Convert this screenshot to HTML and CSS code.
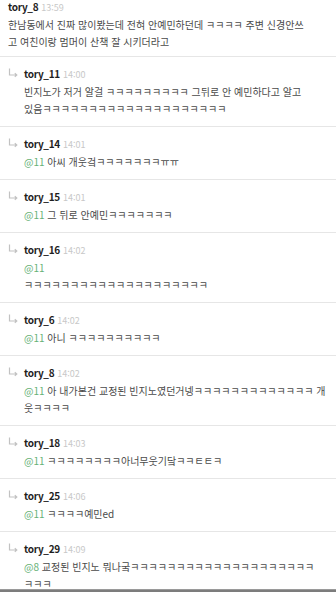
FILE: index.html
```html
<!DOCTYPE html>
<html lang="ko">
<head>
<meta charset="utf-8">
<title>댓글</title>
<link rel="stylesheet" href="styles.css">
</head>
<body>
<div class="screen">
  <ul class="thread">
    <li class="comment comment--root">
      <div class="head"><span class="name">tory_8</span><span class="time">13:59</span></div>
      <p class="text">한남동에서 진짜 많이봤는데 전혀 안예민하던데 ㅋㅋㅋㅋ 주변 신경안쓰<br>고 여친이랑 멈머이 산책 잘 시키더라고</p>
    </li>
    <li class="comment comment--reply">
      <svg class="arrow" viewBox="0 0 10 10" width="10" height="10"><path d="M1.5 0.5V7H8.5M6.8 5.2L8.8 7L6.8 8.8"/></svg>
      <div class="head"><span class="name">tory_11</span><span class="time">14:00</span></div>
      <p class="text">빈지노가 저거 알걸 ㅋㅋㅋㅋㅋㅋㅋㅋㅋ 그뒤로 안 예민하다고 알고<br>있음ㅋㅋㅋㅋㅋㅋㅋㅋㅋㅋㅋㅋㅋㅋㅋㅋㅋㅋㅋㅋ</p>
    </li>
    <li class="comment comment--reply">
      <svg class="arrow" viewBox="0 0 10 10" width="10" height="10"><path d="M1.5 0.5V7H8.5M6.8 5.2L8.8 7L6.8 8.8"/></svg>
      <div class="head"><span class="name">tory_14</span><span class="time">14:01</span></div>
      <p class="text"><span class="mention">@11</span> 아씨 개웃겈ㅋㅋㅋㅋㅋㅋㅋㅠㅠ</p>
    </li>
    <li class="comment comment--reply">
      <svg class="arrow" viewBox="0 0 10 10" width="10" height="10"><path d="M1.5 0.5V7H8.5M6.8 5.2L8.8 7L6.8 8.8"/></svg>
      <div class="head"><span class="name">tory_15</span><span class="time">14:01</span></div>
      <p class="text"><span class="mention">@11</span> 그 뒤로 안예민ㅋㅋㅋㅋㅋㅋㅋ</p>
    </li>
    <li class="comment comment--reply">
      <svg class="arrow" viewBox="0 0 10 10" width="10" height="10"><path d="M1.5 0.5V7H8.5M6.8 5.2L8.8 7L6.8 8.8"/></svg>
      <div class="head"><span class="name">tory_16</span><span class="time">14:02</span></div>
      <p class="text"><span class="mention">@11</span><br>ㅋㅋㅋㅋㅋㅋㅋㅋㅋㅋㅋㅋㅋㅋㅋㅋㅋㅋㅋㅋ</p>
    </li>
    <li class="comment comment--reply">
      <svg class="arrow" viewBox="0 0 10 10" width="10" height="10"><path d="M1.5 0.5V7H8.5M6.8 5.2L8.8 7L6.8 8.8"/></svg>
      <div class="head"><span class="name">tory_6</span><span class="time">14:02</span></div>
      <p class="text"><span class="mention">@11</span> 아니 ㅋㅋㅋㅋㅋㅋㅋㅋㅋㅋ</p>
    </li>
    <li class="comment comment--reply">
      <svg class="arrow" viewBox="0 0 10 10" width="10" height="10"><path d="M1.5 0.5V7H8.5M6.8 5.2L8.8 7L6.8 8.8"/></svg>
      <div class="head"><span class="name">tory_8</span><span class="time">14:02</span></div>
      <p class="text"><span class="mention">@11</span> 아 내가본건 교정된 빈지노였던거넹ㅋㅋㅋㅋㅋㅋㅋㅋㅋㅋㅋㅋㅋ 개<br>웃ㅋㅋㅋㅋ</p>
    </li>
    <li class="comment comment--reply">
      <svg class="arrow" viewBox="0 0 10 10" width="10" height="10"><path d="M1.5 0.5V7H8.5M6.8 5.2L8.8 7L6.8 8.8"/></svg>
      <div class="head"><span class="name">tory_18</span><span class="time">14:03</span></div>
      <p class="text"><span class="mention">@11</span> ㅋㅋㅋㅋㅋㅋㅋㅋ아너무웃기닼ㅋㅋㅌㅌㅋ</p>
    </li>
    <li class="comment comment--reply">
      <svg class="arrow" viewBox="0 0 10 10" width="10" height="10"><path d="M1.5 0.5V7H8.5M6.8 5.2L8.8 7L6.8 8.8"/></svg>
      <div class="head"><span class="name">tory_25</span><span class="time">14:06</span></div>
      <p class="text"><span class="mention">@11</span> ㅋㅋㅋㅋ예민ed</p>
    </li>
    <li class="comment comment--reply">
      <svg class="arrow" viewBox="0 0 10 10" width="10" height="10"><path d="M1.5 0.5V7H8.5M6.8 5.2L8.8 7L6.8 8.8"/></svg>
      <div class="head"><span class="name">tory_29</span><span class="time">14:09</span></div>
      <p class="text"><span class="mention">@8</span> 교정된 빈지노 뭐나궄ㅋㅋㅋㅋㅋㅋㅋㅋㅋㅋㅋㅋㅋㅋㅋㅋㅋㅋㅋㅋ<br>ㅋㅋㅋ</p>
    </li>
  </ul>
  <div class="bar"></div>
</div>
</body>
</html>
```

FILE: styles.css
```css
* { box-sizing: border-box; }

html, body {
  margin: 0;
  padding: 0;
  background: #ffffff;
}

body {
  font-family: "Noto Sans CJK KR", "Noto Sans", sans-serif;
  color: #444444;
}

.screen {
  width: 336px;
  height: 592px;
  display: flex;
  flex-direction: column;
  overflow: hidden;
}

.thread {
  flex: 1;
  min-height: 0;
  overflow: hidden;
  list-style: none;
  margin: 0;
  padding: 0;
}

.comment {
  border-bottom: 1px solid #e6e6e6;
}

.comment--root {
  padding: 0 4px 6px 8px;
}

.comment--reply {
  display: grid;
  grid-template-columns: 16px 1fr;
  padding: 10px 2px 9px 8px;
}

.arrow {
  grid-column: 1;
  grid-row: 1;
  align-self: center;
  margin-top: -3px;
  fill: none;
  stroke: #c2c2c2;
  stroke-width: 1.2;
}

.head {
  grid-column: 2;
  display: flex;
  align-items: baseline;
  gap: 3px;
  height: 14px;
  line-height: 14px;
}

.name {
  font-size: 10px;
  font-weight: 700;
  letter-spacing: -0.3px;
  color: #1e1e1e;
}

.time {
  font-size: 9px;
  color: #c8c8c8;
}

.text {
  grid-column: 2;
  margin: 2px 0 0;
  font-size: 10px;
  line-height: 17px;
  color: #4a4a4a;
  white-space: nowrap;
}

.mention {
  color: #66b176;
}

.bar {
  flex: 0 0 3px;
  background: #7c7c7c;
  border-top: 1px solid #9a9a9a;
}
```
